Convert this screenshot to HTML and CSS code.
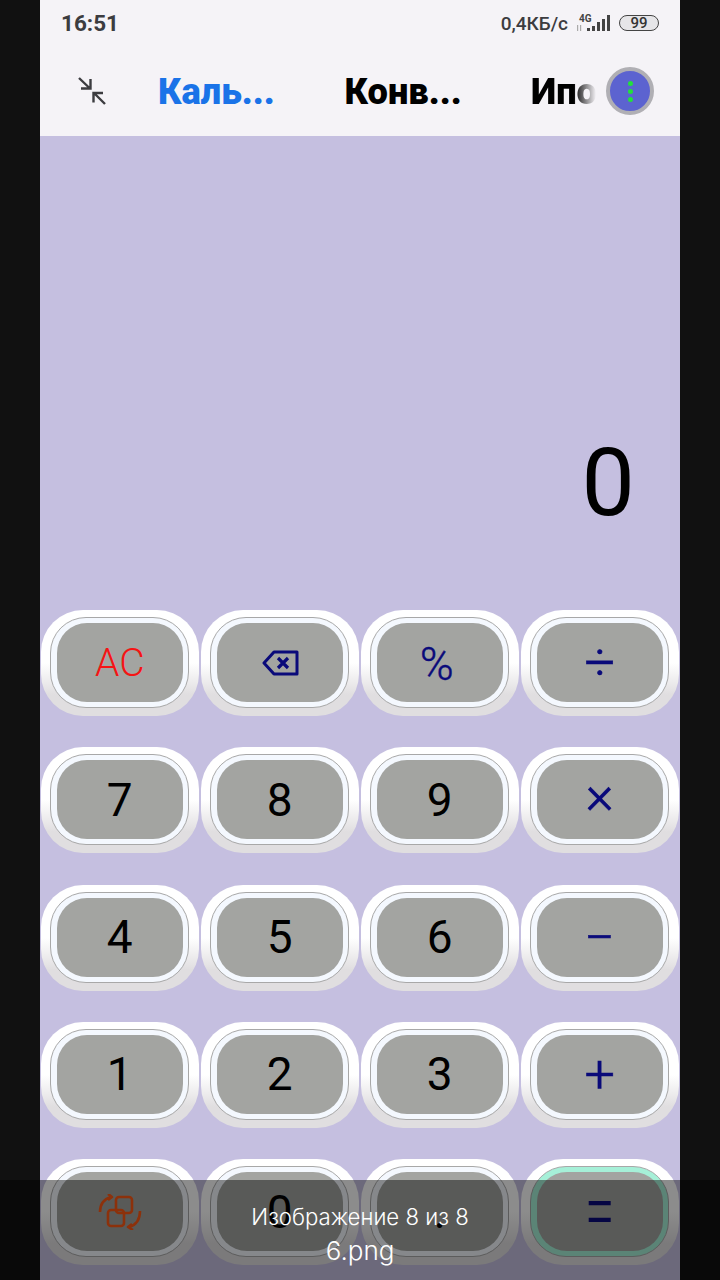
FILE: index.html
```html
<!DOCTYPE html>
<html lang="en">
<head>
    <meta charset="UTF-8">
    <meta name="viewport" content="width=device-width, initial-scale=1.0">
    <title>Калькулятор</title>
    <link rel="stylesheet" href="styles.css">
</head>
<body>
    <div class="phone">
        <!-- Status bar -->
        <div class="status">
            <span class="time">16:51</span>
            <div class="status-right">
                <span class="speed">0,4КБ/с</span>
                <svg class="signal" width="34" height="18" viewBox="0 0 34 18">
                    <text x="3" y="8" class="net">4G</text>
                    <rect x="1" y="11" width="1.2" height="6" fill="#aaa"/>
                    <rect x="4" y="11" width="1.2" height="6" fill="#aaa"/>
                    <rect x="11" y="14" width="3" height="3" fill="#444"/>
                    <rect x="16" y="12" width="3" height="5" fill="#444"/>
                    <rect x="21" y="8" width="3" height="9" fill="#444"/>
                    <rect x="26" y="5" width="3" height="12" fill="#444"/>
                    <rect x="31" y="1" width="3" height="16" fill="#444"/>
                </svg>
                <span class="battery">99</span>
            </div>
        </div>

        <!-- Tabs -->
        <div class="tabs">
            <svg class="collapse" width="28" height="28" viewBox="0 0 28 28" fill="none" stroke="#3c3c40" stroke-width="2.4">
                <path d="M1 1 L12 11.5 M3 11.5 H12.5 V2"/>
                <path d="M27 27 L16 16 M25 16 H15.5 V25.5"/>
            </svg>
            <span class="tab active">Каль...</span>
            <span class="tab">Конв...</span>
            <span class="tab tab-cut">Ипо</span>
            <span class="more"><i></i><i></i><i></i></span>
        </div>

        <!-- Display -->
        <div class="display">0</div>

        <!-- Keys -->
        <div class="keys">
            <div class="key"><div class="ring"><div class="face red">AC</div></div></div>
            <div class="key"><div class="ring"><div class="face navy">
                <svg class="back" width="38" height="26" viewBox="0 0 38 26" fill="none" stroke="#0a0a7a" stroke-width="3" stroke-linejoin="round">
                    <path d="M12 2 H35 V24 H12 L2 13 Z"/>
                    <path d="M16 8 L26 18 M26 8 L16 18" stroke-width="3.2"/>
                </svg>
            </div></div></div>
            <div class="key"><div class="ring"><div class="face navy percent">%</div></div></div>
            <div class="key"><div class="ring"><div class="face navy op">÷</div></div></div>

            <div class="key"><div class="ring"><div class="face">7</div></div></div>
            <div class="key"><div class="ring"><div class="face">8</div></div></div>
            <div class="key"><div class="ring"><div class="face">9</div></div></div>
            <div class="key"><div class="ring"><div class="face navy op times">×</div></div></div>

            <div class="key"><div class="ring"><div class="face">4</div></div></div>
            <div class="key"><div class="ring"><div class="face">5</div></div></div>
            <div class="key"><div class="ring"><div class="face">6</div></div></div>
            <div class="key"><div class="ring"><div class="face navy op">−</div></div></div>

            <div class="key"><div class="ring"><div class="face">1</div></div></div>
            <div class="key"><div class="ring"><div class="face">2</div></div></div>
            <div class="key"><div class="ring"><div class="face">3</div></div></div>
            <div class="key"><div class="ring"><div class="face navy op">+</div></div></div>

            <div class="key"><div class="ring"><div class="face">
                <svg width="46" height="36" viewBox="0 0 46 36" fill="none" stroke="#ff5a14" stroke-width="2.6" stroke-linejoin="round">
                    <rect x="19" y="3" width="16" height="16" rx="3"/>
                    <rect x="11" y="16" width="16" height="16" rx="3"/>
                    <path d="M3 18 C3 10 7 5 14 3 M11 0 L15 3 L11 6"/>
                    <path d="M43 17 C43 25 39 31 32 33 M35 30 L31 33 L36 36"/>
                </svg>
            </div></div></div>
            <div class="key"><div class="ring"><div class="face">0</div></div></div>
            <div class="key"><div class="ring"><div class="face">.</div></div></div>
            <div class="key"><div class="ring ring-green"><div class="face navy op"><span class="equals">=</span></div></div></div>
        </div>
    </div>

    <!-- Gallery caption over the screenshot -->
    <div class="caption">
        <div class="caption-title">Изображение 8 из 8</div>
        <div class="caption-file">6.png</div>
    </div>
</body>
</html>
```

FILE: styles.css
```css
/* General page */
html, body {
    margin: 0;
    padding: 0;
    height: 1280px;
    overflow: hidden;
    background-color: #111;
    font-family: Roboto, sans-serif;
}

.phone {
    width: 640px;
    height: 1280px;
    margin: 0 auto;
    background-color: #c5bfe0;
    overflow: hidden;
}

/* Status bar */
.status {
    height: 46px;
    padding: 0 21px;
    display: flex;
    align-items: center;
    justify-content: space-between;
    background-color: #f5f3f7;
    color: #3c3c40;
}

.time {
    font-size: 22.5px;
    font-weight: 700;
}

.status-right {
    display: flex;
    align-items: center;
    gap: 8px;
}

.speed {
    font-size: 19px;
    font-weight: 500;
}

.signal {
    margin-right: 1px;
}

.net {
    font-size: 10px;
    font-weight: 700;
    fill: #444;
}

.battery {
    width: 38px;
    height: 14px;
    border: 1.5px solid #444;
    border-radius: 9px;
    background-color: #e6e5e8;
    font-size: 15px;
    font-weight: 500;
    line-height: 14px;
    text-align: center;
    color: #333;
}

/* Tabs */
.tabs {
    position: relative;
    height: 90px;
    display: flex;
    align-items: center;
    background-color: #f5f3f7;
}

.collapse {
    margin-left: 38px;
    margin-right: 52px;
}

.tab {
    width: 186.5px;
    font-size: 36.3px;
    font-weight: 900;
    color: #000;
    white-space: nowrap;
}

.tab.active {
    color: #1a73e8;
}

.tab-cut {
    width: 65px;
    overflow: hidden;
    background: linear-gradient(to right, #000 65%, transparent 100%);
    -webkit-background-clip: text;
    color: transparent;
}

.more {
    position: absolute;
    left: 566px;
    top: 21px;
    width: 40px;
    height: 40px;
    border: 4px solid #b0afb4;
    border-radius: 50%;
    background-color: #5c63d0;
    display: flex;
    flex-direction: column;
    align-items: center;
    justify-content: center;
    gap: 3px;
}

.more i {
    width: 5px;
    height: 5px;
    border-radius: 50%;
    background-color: #22e03c;
}

/* Display */
.display {
    height: 474px;
    padding-right: 45px;
    padding-bottom: 80px;
    display: flex;
    align-items: flex-end;
    justify-content: flex-end;
    box-sizing: border-box;
    font-size: 95px;
    line-height: 1;
    color: #000;
}

/* Keys */
.keys {
    display: grid;
    grid-template-columns: repeat(4, 158px);
    column-gap: 2px;
    row-gap: 31.3px;
    padding-left: 1px;
}

.key {
    height: 106px;
    padding: 7px 10px 8px 8.5px;
    box-sizing: border-box;
    border-radius: 42px;
    background: linear-gradient(to bottom, #fff 0%, #fff 50%, #e0dee0 80%, #e0dee0 100%);
}

.ring {
    height: 100%;
    box-sizing: border-box;
    border: 1.5px solid #a8a8a8;
    border-radius: 36px;
    background-color: #f4f8fe;
    padding: 5px 5px 5px 6px;
}

.ring-green {
    background-color: #a6f0d8;
}

.face {
    height: 100%;
    border-radius: 30px;
    background-color: #a3a4a1;
    display: flex;
    align-items: center;
    justify-content: center;
    font-size: 46px;
    color: #000;
}

.face.navy {
    color: #0a0a7a;
}

.face.red {
    font-size: 39px;
    font-weight: 300;
    color: #f51414;
}

.face.percent {
    padding-right: 6px;
    padding-top: 3px;
    box-sizing: border-box;
    font-weight: 300;
    -webkit-text-stroke: 0.4px #0a0a7a;
}

.face.op {
    font-size: 54px;
    font-weight: 300;
    -webkit-text-stroke: 0.6px #0a0a7a;
}

.face.times {
    padding-bottom: 10px;
    box-sizing: border-box;
}

.equals {
    display: inline-block;
    transform: scaleY(1.5);
    -webkit-text-stroke: 0;
}

.back {
    margin-left: 2px;
}

/* Gallery caption */
.caption {
    position: absolute;
    left: 0;
    top: 1180px;
    width: 720px;
    height: 100px;
    padding-top: 20px;
    box-sizing: border-box;
    background-color: rgba(0, 0, 0, 0.45);
    color: #fff;
    font-family: Inter, sans-serif;
    font-weight: 300;
    line-height: 34px;
    text-align: center;
}

.caption-title {
    font-size: 22.2px;
}

.caption-file {
    font-size: 26px;
}
```
